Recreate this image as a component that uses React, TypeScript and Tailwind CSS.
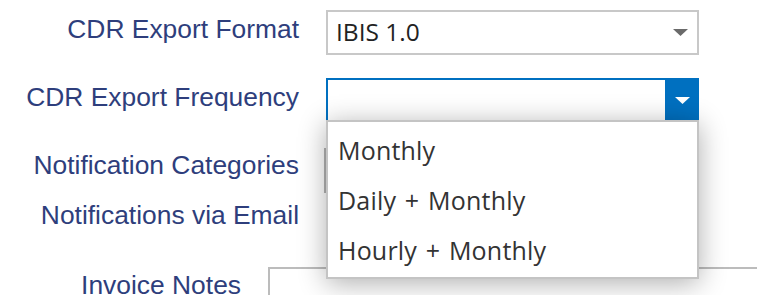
import React from "react";

const Caret = ({ color }: { color: string }) => (
  <svg width="15" height="7" viewBox="0 0 15 7" className="block">
    <path d="M0 0 L15 0 L7.5 7 Z" fill={color} />
  </svg>
);

export default function App() {
  const label =
    "text-[26.4px] leading-[30px] text-[#2e3e7c] text-right whitespace-nowrap";
  return (
    <div
      className="relative w-[757px] h-[295px] overflow-hidden bg-white"
      style={{ fontFamily: '"Liberation Sans", Arial, sans-serif' }}
    >
      <div className="flex flex-col pt-[10px]">
        {/* Row 1 */}
        <div className="flex items-start h-[45px]">
          <div className={`w-[299px] mt-[4px] ${label}`}>CDR Export Format</div>
          <div
            className="ml-[27px] w-[373px] h-[45px] border-2 border-[#c8c8c8] flex items-center justify-between pl-[8px] pr-[9px] text-[#222]"
            style={{ fontFamily: '"Open Sans", "Noto Sans", sans-serif' }}
          >
            <span className="text-[24.5px] leading-none">IBIS 1.0</span>
            <Caret color="#6a6a6a" />
          </div>
        </div>

        {/* Row 2 */}
        <div className="flex items-start h-[42px] mt-[23px]">
          <div className={`w-[299px] mt-[4px] ${label}`}>CDR Export Frequency</div>
          <div className="ml-[27px] w-[373px] h-[42px] border-t-2 border-l-2 border-[#0070c0] flex">
            <div className="flex-1 bg-white" />
            <div className="w-[34px] bg-[#0070c0] flex items-center justify-center pt-[1px]">
              <Caret color="#ffffff" />
            </div>
          </div>
        </div>

        {/* Row 3 */}
        <div className="flex items-start h-[50px] mt-[26px]">
          <div className={`w-[299px] mt-[4px] ${label}`}>Notification Categories</div>
          <div className="ml-[25px] mt-[2px] w-[373px] h-[45px] border-2 border-[#b4b4b4]" />
        </div>

        {/* Row 4 */}
        <div className="flex items-start h-[71px]">
          <div className={`w-[299px] mt-[4px] ${label}`}>Notifications via Email</div>
        </div>

        {/* Row 5 */}
        <div className="flex items-start h-[60px]">
          <div className={`w-[241px] mt-[3px] ${label}`}>Invoice Notes</div>
          <div className="ml-[27px] flex-1 h-[60px] border-t-2 border-l-2 border-[#bcbcbc]" />
        </div>
      </div>

      {/* Open dropdown menu */}
      <div
        className="absolute left-[326px] top-[120px] w-[373px] h-[159px] bg-white border-2 border-[#c4c4c4] shadow-[0_4px_26px_rgba(0,0,0,0.32)] flex flex-col pt-[3px] text-[#333]"
        style={{ fontFamily: '"Open Sans", "Noto Sans", sans-serif' }}
      >
        {["Monthly", "Daily + Monthly", "Hourly + Monthly"].map((t) => (
          <div
            key={t}
            className="h-[50px] flex items-center pl-[10px] text-[25px] leading-none tracking-[0.2px] [word-spacing:2px]"
          >
            {t}
          </div>
        ))}
      </div>
    </div>
  );
}
